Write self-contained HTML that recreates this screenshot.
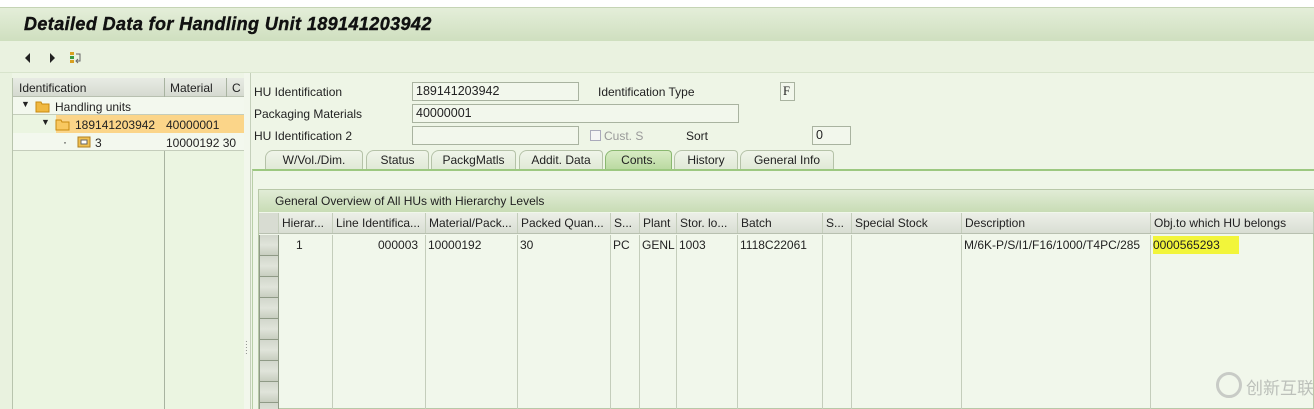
<!DOCTYPE html><html><head><meta charset="utf-8"><style>
*{margin:0;padding:0;box-sizing:border-box}
body{width:1314px;height:409px;overflow:hidden;background:#eef5e6;font-family:"Liberation Sans","DejaVu Sans",sans-serif;font-size:12px;color:#222;position:relative}
.a{position:absolute;white-space:nowrap}
.title{left:0;top:7px;width:1314px;height:34px;background:linear-gradient(#e4eed9,#cfdfbf);border-top:1px solid #c5d4b5}
.title span{position:absolute;left:24px;top:6px;font-size:18px;font-weight:bold;font-style:italic;color:#111;letter-spacing:0.4px;-webkit-text-stroke:0.4px #111}
.tb{left:0;top:41px;width:1314px;height:32px;background:#eaf2e0;border-bottom:1px solid #d8e4cc}
.lp{left:12px;top:78px;width:232px;height:331px;background:#ebf5e1;border-left:1px solid #b8c4ad}
.hd{background:linear-gradient(#e8ebe4,#d5dad0);border-bottom:1px solid #b8c0b0;height:19px;top:0}
.vl{position:absolute;width:1px;background:#a8b3a0}
.fld{position:absolute;height:19px;border:1px solid #a9b3a0;background:#f2f7ec;padding:1px 3px;font-size:12.5px}
.tab{position:absolute;top:150px;height:20px;background:linear-gradient(#f0f5ea,#dfe8d5);border:1px solid #b5c2a8;border-bottom:none;text-align:center;line-height:19px;border-radius:8px 4px 0 0}
.cell{position:absolute;top:0;height:100%;border-right:1px solid #c4cdbb;padding:3px 3px;overflow:hidden}
</style></head><body>
<div class="a" style="left:0;top:0;width:1314px;height:7px;background:#fff"></div>
<div class="a title"><span>Detailed Data for Handling Unit 189141203942</span></div>
<div class="a tb">
<svg class="a" style="left:22px;top:9px" width="60" height="16"><path d="M8 3 L3 8 L8 13Z" fill="#222"/><path d="M28 3 L33 8 L28 13Z" fill="#222"/><rect x="48" y="2" width="4" height="3" fill="#d8a020"/><rect x="48" y="6" width="4" height="3" fill="#3a9a40"/><rect x="48" y="10" width="4" height="3" fill="#d8a020"/><path d="M54 4 h4 v7 h-3 M56 9 l-2 2 l2 2" stroke="#666" fill="none"/></svg>
</div>
<div class="a" style="left:0;top:73px;width:12px;height:336px;background:#e9f2df"></div>
<div class="a lp">
<div class="a hd" style="left:0;width:232px"></div>
<div class="a" style="left:6px;top:3px">Identification</div>
<div class="a" style="left:157px;top:3px">Material</div>
<div class="a" style="left:219px;top:3px">C</div>
<div class="vl" style="left:151px;top:0;height:331px"></div>
<div class="vl" style="left:213px;top:0;height:19px"></div>
<div class="a" style="left:0;top:19px;width:232px;height:18px;border-bottom:1px solid #c4cdbb;background:#f3f8ee"></div>
<div class="a" style="left:8px;top:21px;font-size:9px">▼</div>
<svg class="a" style="left:22px;top:22px" width="16" height="13"><path d="M1 2h5l1 2h7v8H1z" fill="#f0b840" stroke="#c88a10"/></svg>
<div class="a" style="left:42px;top:22px">Handling units</div>
<div class="a" style="left:43px;top:37px;width:189px;height:18px;background:#fbd589"></div>
<div class="a" style="left:28px;top:39px;font-size:9px">▼</div>
<svg class="a" style="left:42px;top:40px" width="16" height="13"><path d="M1 2h5l1 2h7v8H1z" fill="#f8c860" stroke="#c88a10"/></svg>
<div class="a" style="left:62px;top:40px">189141203942</div>
<div class="a" style="left:153px;top:40px">40000001</div>
<div class="a" style="left:0;top:55px;width:232px;height:18px;border-bottom:1px solid #c4cdbb;background:#f3f8ee"></div>
<div class="a" style="left:50px;top:57px">·</div>
<svg class="a" style="left:63px;top:58px" width="16" height="12"><rect x="2" y="1" width="12" height="10" fill="#f0c050" stroke="#b08020"/><rect x="5" y="4" width="6" height="4" fill="#fff" stroke="#666"/></svg>
<div class="a" style="left:82px;top:58px">3</div>
<div class="a" style="left:153px;top:58px">10000192 30</div>
</div>
<div class="a" style="left:244px;top:73px;width:6px;height:336px;background:#f2f7ec"></div>
<div class="a" style="left:245px;top:340px;font-size:8px;line-height:3px;color:#666">·<br>·<br>·<br>·<br>·</div>
<div class="vl" style="left:250px;top:73px;height:336px;background:#c5d0bb"></div>
<div class="a" style="left:254px;top:85px">HU Identification</div>
<div class="a" style="left:254px;top:107px">Packaging Materials</div>
<div class="a" style="left:254px;top:129px">HU Identification 2</div>
<div class="fld" style="left:412px;top:82px;width:167px">189141203942</div>
<div class="fld" style="left:412px;top:104px;width:327px">40000001</div>
<div class="fld" style="left:412px;top:126px;width:167px"></div>
<div class="a" style="left:598px;top:85px">Identification Type</div>
<div class="fld" style="left:780px;top:82px;width:15px;padding:1px 2px;font-family:'Liberation Serif',serif">F</div>
<div class="a" style="left:590px;top:130px;width:11px;height:11px;border:1px solid #aab;background:#f4f4f4"></div>
<div class="a" style="left:604px;top:129px;color:#999">Cust. S</div>
<div class="a" style="left:686px;top:129px">Sort</div>
<div class="fld" style="left:812px;top:126px;width:39px">0</div>
<div class="tab" style="left:265px;width:98px">W/Vol./Dim.</div>
<div class="tab" style="left:366px;width:63px">Status</div>
<div class="tab" style="left:431px;width:85px">PackgMatls</div>
<div class="tab" style="left:519px;width:84px">Addit. Data</div>
<div class="tab" style="left:605px;width:67px;background:linear-gradient(#d8ebc4,#b9d9a0);border-color:#8ab870">Conts.</div>
<div class="tab" style="left:674px;width:64px">History</div>
<div class="tab" style="left:740px;width:94px">General Info</div>
<div class="a" style="left:252px;top:169px;width:1062px;height:240px;border-top:2px solid #9cc880;border-left:1px solid #b9cfa8;background:#eff6e8"></div>
<div class="a" style="left:258px;top:189px;width:1056px;height:220px;border:1px solid #b8c8a8;background:#f1f7eb"></div>
<div class="a" style="left:259px;top:190px;width:1055px;height:22px;background:linear-gradient(#e1ecd6,#c8dcb5)"></div>
<div class="a" style="left:275px;top:194px">General Overview of All HUs with Hierarchy Levels</div>
<div class="a" style="left:259px;top:213px;width:1055px;height:21px;background:linear-gradient(#ecefe8,#d9ded3);border-bottom:1px solid #b8c0b0">
<div class="cell" style="left:0;width:20px;background:#d8dcd2"></div>
<div class="cell" style="left:20px;width:54px">Hierar...</div>
<div class="cell" style="left:74px;width:93px">Line Identifica...</div>
<div class="cell" style="left:167px;width:92px">Material/Pack...</div>
<div class="cell" style="left:259px;width:93px">Packed Quan...</div>
<div class="cell" style="left:352px;width:29px">S...</div>
<div class="cell" style="left:381px;width:37px">Plant</div>
<div class="cell" style="left:418px;width:61px">Stor. lo...</div>
<div class="cell" style="left:479px;width:85px">Batch</div>
<div class="cell" style="left:564px;width:29px">S...</div>
<div class="cell" style="left:593px;width:110px">Special Stock</div>
<div class="cell" style="left:703px;width:189px">Description</div>
<div class="cell" style="left:892px;width:163px">Obj.to which HU belongs</div>
</div>
<div class="a" style="left:259px;top:235px;width:1055px;height:174px">
<div class="cell" style="left:20px;width:54px"></div><div class="cell" style="left:74px;width:93px"></div><div class="cell" style="left:167px;width:92px"></div><div class="cell" style="left:259px;width:93px"></div><div class="cell" style="left:352px;width:29px"></div><div class="cell" style="left:381px;width:37px"></div><div class="cell" style="left:418px;width:61px"></div><div class="cell" style="left:479px;width:85px"></div><div class="cell" style="left:564px;width:29px"></div><div class="cell" style="left:593px;width:110px"></div><div class="cell" style="left:703px;width:189px"></div><div class="cell" style="left:892px;width:163px;border:none"></div>
<div class="a" style="left:0;top:0;width:20px;height:174px;background:repeating-linear-gradient(#d2d7cc 0,#e0e4da 10px,#c8cec0 20px,#8f9a86 20px,#8f9a86 21px);border-right:1px solid #8f9a86;border-left:1px solid #8f9a86"></div>
<div class="a" style="left:37px;top:3px">1</div>
<div class="a" style="left:119px;top:3px">000003</div>
<div class="a" style="left:169px;top:3px">10000192</div>
<div class="a" style="left:261px;top:3px">30</div>
<div class="a" style="left:354px;top:3px">PC</div>
<div class="a" style="left:383px;top:3px">GENL</div>
<div class="a" style="left:420px;top:3px">1003</div>
<div class="a" style="left:481px;top:3px">1118C22061</div>
<div class="a" style="left:705px;top:3px">M/6K-P/S/I1/F16/1000/T4PC/285</div>
<div class="a" style="left:894px;top:1px;width:86px;height:18px;background:#f2f53a"></div>
<div class="a" style="left:894px;top:3px">0000565293</div>
</div>
<div class="a" style="left:1216px;top:372px;width:26px;height:26px;border-radius:50%;border:3px solid #c8cbc6"></div>
<div class="a" style="left:1246px;top:374px;font-family:'Noto Sans CJK SC',sans-serif;font-size:17px;color:#bcc0ba">创新互联</div>
</body></html>
